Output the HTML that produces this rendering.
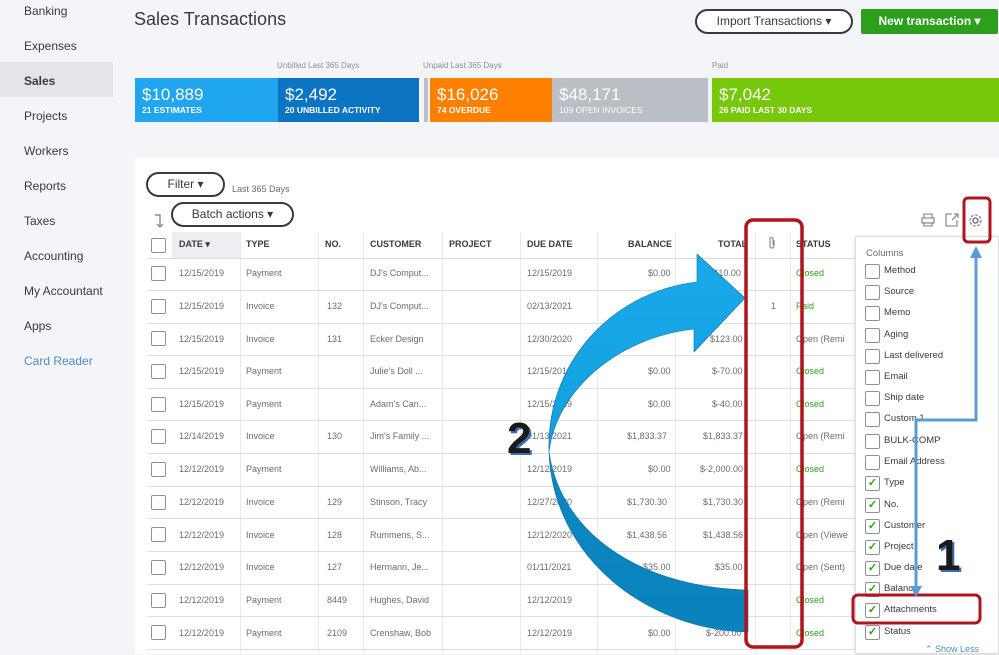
<!DOCTYPE html>
<html><head><style>
*{margin:0;padding:0;box-sizing:border-box}
body{width:999px;height:654px;overflow:hidden;background:#f4f5f8;font-family:"Liberation Sans",sans-serif;color:#393a3d;position:relative}
.a{position:absolute;white-space:nowrap}
.nav{left:24px;font-size:12px;color:#393a3d}
.card{position:absolute;top:78px;height:44px;color:#fff}
.card b{position:absolute;left:7px;top:7px;font-size:17px;font-weight:normal}
.card i{position:absolute;left:7px;top:27px;font-size:8.5px;font-style:normal;font-weight:bold}
.lbl{font-size:8px;color:#8d9096;top:61px}
.th{font-size:9px;font-weight:bold;color:#393a3d;top:239px}
.cb{position:absolute;width:15px;height:15px;border:1px solid #8d9096;border-radius:2px;background:#fff}
.td{font-size:9px;color:#6b6c72}
.hl{position:absolute;left:147px;width:708px;height:1px;background:#dcdee2}
.vl{position:absolute;top:232px;width:1px;height:422px;background:#e8e9ec}
.dc{position:absolute;left:865px;width:15px;height:15px;border:1px solid #8d9096;border-radius:2px;background:#fff;color:#2ca01c;font-size:11px;line-height:13px;text-align:center;font-weight:bold}
.dl{left:884px;font-size:9.5px;color:#393a3d}
</style></head><body>
<div class="a" style="left:0;top:62px;width:113px;height:35px;background:#e3e5e8"></div>
<div class="a nav" style="top:4px">Banking</div>
<div class="a nav" style="top:39px">Expenses</div>
<div class="a nav" style="top:74px;font-weight:bold">Sales</div>
<div class="a nav" style="top:109px">Projects</div>
<div class="a nav" style="top:144px">Workers</div>
<div class="a nav" style="top:179px">Reports</div>
<div class="a nav" style="top:214px">Taxes</div>
<div class="a nav" style="top:249px">Accounting</div>
<div class="a nav" style="top:284px">My Accountant</div>
<div class="a nav" style="top:319px">Apps</div>
<div class="a nav" style="top:354px;color:#4b8ebf">Card Reader</div>

<div class="a" style="left:134px;top:9px;font-size:18px;color:#393a3d">Sales Transactions</div>
<div class="a" style="left:695px;top:9px;width:158px;height:25px;border:2px solid #393a3d;border-radius:13px;font-size:12px;text-align:center;line-height:21px;background:#fff">Import Transactions ▾</div>
<div class="a" style="left:861px;top:9px;width:137px;height:25px;background:#2ca01c;border-radius:2px;color:#fff;font-size:12px;font-weight:bold;text-align:center;line-height:25px">New transaction ▾</div>

<div class="a lbl" style="left:277px">Unbilled Last 365 Days</div>
<div class="a lbl" style="left:423px">Unpaid Last 365 Days</div>
<div class="a lbl" style="left:712px">Paid</div>
<div class="card" style="left:135px;width:143px;background:#1fa6ee"><b>$10,889</b><i>21 ESTIMATES</i></div>
<div class="card" style="left:278px;width:141px;background:#0b75c4"><b>$2,492</b><i>20 UNBILLED ACTIVITY</i></div>
<div class="card" style="left:424px;width:4px;background:#babec5"></div>
<div class="card" style="left:430px;width:122px;background:#ff8000"><b>$16,026</b><i>74 OVERDUE</i></div>
<div class="card" style="left:552px;width:156px;background:#babec5"><b>$48,171</b><i style="font-weight:normal">109 OPEN INVOICES</i></div>
<div class="card" style="left:712px;width:287px;background:#77c70b"><b>$7,042</b><i>26 PAID LAST 30 DAYS</i></div>

<div class="a" style="left:135px;top:158px;width:864px;height:496px;background:#fff"></div>
<div class="a" style="left:146px;top:172px;width:79px;height:25px;border:2px solid #393a3d;border-radius:13px;font-size:12px;text-align:center;line-height:21px">Filter ▾</div>
<div class="a" style="left:232px;top:184px;font-size:9px;color:#6b6c72">Last 365 Days</div>
<div class="a" style="left:171px;top:202px;width:123px;height:25px;border:2px solid #393a3d;border-radius:13px;font-size:12px;text-align:center;line-height:21px">Batch actions ▾</div>
<svg class="a" style="left:153px;top:214px" width="12" height="14" viewBox="0 0 12 14"><path d="M2 1H7V12M4 10L7 13L10 10" fill="none" stroke="#8d9096" stroke-width="1.5"/></svg>
<svg class="a" style="left:920px;top:212px" width="16" height="16" viewBox="0 0 16 16"><path d="M4 6V2H12V6M2 6H14V11H2ZM4 10V14H12V10" fill="none" stroke="#8d9096" stroke-width="1.3"/></svg>
<svg class="a" style="left:944px;top:212px" width="16" height="16" viewBox="0 0 16 16"><path d="M13 8V14H2V2H8M10 2H14V6M14 2L8 8" fill="none" stroke="#8d9096" stroke-width="1.3"/></svg>
<svg class="a" style="left:967px;top:212px" width="17" height="17" viewBox="0 0 20 20"><circle cx="10" cy="10" r="3" fill="none" stroke="#6b6c72" stroke-width="1.5"/><circle cx="10" cy="10" r="6.5" fill="none" stroke="#6b6c72" stroke-width="1.3" stroke-dasharray="3 2"/></svg>

<div class="a" style="left:172px;top:232px;width:68px;height:26px;background:#eceef1"></div>
<div class="cb" style="left:151px;top:238px"></div>
<div class="a th" style="left:179px">DATE ▾</div>
<div class="a th" style="left:246px">TYPE</div>
<div class="a th" style="left:325px">NO.</div>
<div class="a th" style="left:370px">CUSTOMER</div>
<div class="a th" style="left:449px">PROJECT</div>
<div class="a th" style="left:527px">DUE DATE</div>
<div class="a th" style="left:628px">BALANCE</div>
<div class="a th" style="left:718px">TOTAL</div>
<svg class="a" style="left:767px;top:236px" width="10" height="14" viewBox="0 0 10 14"><path d="M7 4V10A2 2 0 0 1 3 10V3A1.3 1.3 0 0 1 6 3V9" fill="none" stroke="#8d9096" stroke-width="1.2"/></svg>
<div class="a th" style="left:796px">STATUS</div>
<div class="vl" style="left:240px"></div><div class="vl" style="left:318px"></div><div class="vl" style="left:363px"></div><div class="vl" style="left:442px"></div><div class="vl" style="left:520px"></div><div class="vl" style="left:597px"></div><div class="vl" style="left:675px"></div><div class="vl" style="left:755px"></div><div class="vl" style="left:790px"></div>

<div class="hl" style="top:258px"></div><div class="hl" style="top:290px"></div><div class="hl" style="top:323px"></div><div class="hl" style="top:355px"></div><div class="hl" style="top:388px"></div><div class="hl" style="top:420px"></div><div class="hl" style="top:453px"></div><div class="hl" style="top:486px"></div><div class="hl" style="top:518px"></div><div class="hl" style="top:551px"></div><div class="hl" style="top:584px"></div><div class="hl" style="top:616px"></div><div class="hl" style="top:649px"></div>

<div class="cb" style="left:151px;top:266px"></div><div class="a td" style="left:179px;top:268px">12/15/2019</div><div class="a td" style="left:246px;top:268px">Payment</div><div class="a td" style="left:370px;top:268px">DJ's Comput...</div><div class="a td" style="left:527px;top:268px">12/15/2019</div><div class="a td" style="left:648px;top:268px">$0.00</div><div class="a td" style="left:706px;top:268px">$-110.00</div><div class="a td" style="left:796px;top:268px;color:#2ca01c">Closed</div>
<div class="cb" style="left:151px;top:299px"></div><div class="a td" style="left:179px;top:301px">12/15/2019</div><div class="a td" style="left:246px;top:301px">Invoice</div><div class="a td" style="left:327px;top:301px">132</div><div class="a td" style="left:370px;top:301px">DJ's Comput...</div><div class="a td" style="left:527px;top:301px">02/13/2021</div><div class="a td" style="left:771px;top:301px">1</div><div class="a td" style="left:796px;top:301px;color:#2ca01c">Paid</div>
<div class="cb" style="left:151px;top:331px"></div><div class="a td" style="left:179px;top:334px">12/15/2019</div><div class="a td" style="left:246px;top:334px">Invoice</div><div class="a td" style="left:327px;top:334px">131</div><div class="a td" style="left:370px;top:334px">Ecker Design</div><div class="a td" style="left:527px;top:334px">12/30/2020</div><div class="a td" style="left:710px;top:334px">$123.00</div><div class="a td" style="left:796px;top:334px">Open (Remi</div>
<div class="cb" style="left:151px;top:364px"></div><div class="a td" style="left:179px;top:366px">12/15/2019</div><div class="a td" style="left:246px;top:366px">Payment</div><div class="a td" style="left:370px;top:366px">Julie's Doll ...</div><div class="a td" style="left:527px;top:366px">12/15/2019</div><div class="a td" style="left:648px;top:366px">$0.00</div><div class="a td" style="left:712px;top:366px">$-70.00</div><div class="a td" style="left:796px;top:366px;color:#2ca01c">Closed</div>
<div class="cb" style="left:151px;top:397px"></div><div class="a td" style="left:179px;top:399px">12/15/2019</div><div class="a td" style="left:246px;top:399px">Payment</div><div class="a td" style="left:370px;top:399px">Adam's Can...</div><div class="a td" style="left:527px;top:399px">12/15/2019</div><div class="a td" style="left:648px;top:399px">$0.00</div><div class="a td" style="left:712px;top:399px">$-40.00</div><div class="a td" style="left:796px;top:399px;color:#2ca01c">Closed</div>
<div class="cb" style="left:151px;top:429px"></div><div class="a td" style="left:179px;top:431px">12/14/2019</div><div class="a td" style="left:246px;top:431px">Invoice</div><div class="a td" style="left:327px;top:431px">130</div><div class="a td" style="left:370px;top:431px">Jim's Family ...</div><div class="a td" style="left:527px;top:431px">01/13/2021</div><div class="a td" style="left:627px;top:431px">$1,833.37</div><div class="a td" style="left:703px;top:431px">$1,833.37</div><div class="a td" style="left:796px;top:431px">Open (Remi</div>
<div class="cb" style="left:151px;top:462px"></div><div class="a td" style="left:179px;top:464px">12/12/2019</div><div class="a td" style="left:246px;top:464px">Payment</div><div class="a td" style="left:370px;top:464px">Williams, Ab...</div><div class="a td" style="left:527px;top:464px">12/12/2019</div><div class="a td" style="left:648px;top:464px">$0.00</div><div class="a td" style="left:700px;top:464px">$-2,000.00</div><div class="a td" style="left:796px;top:464px;color:#2ca01c">Closed</div>
<div class="cb" style="left:151px;top:495px"></div><div class="a td" style="left:179px;top:497px">12/12/2019</div><div class="a td" style="left:246px;top:497px">Invoice</div><div class="a td" style="left:327px;top:497px">129</div><div class="a td" style="left:370px;top:497px">Stinson, Tracy</div><div class="a td" style="left:527px;top:497px">12/27/2020</div><div class="a td" style="left:627px;top:497px">$1,730.30</div><div class="a td" style="left:703px;top:497px">$1,730.30</div><div class="a td" style="left:796px;top:497px">Open (Remi</div>
<div class="cb" style="left:151px;top:527px"></div><div class="a td" style="left:179px;top:530px">12/12/2019</div><div class="a td" style="left:246px;top:530px">Invoice</div><div class="a td" style="left:327px;top:530px">128</div><div class="a td" style="left:370px;top:530px">Rummens, S...</div><div class="a td" style="left:527px;top:530px">12/12/2020</div><div class="a td" style="left:627px;top:530px">$1,438.56</div><div class="a td" style="left:703px;top:530px">$1,438.56</div><div class="a td" style="left:796px;top:530px">Open (Viewe</div>
<div class="cb" style="left:151px;top:560px"></div><div class="a td" style="left:179px;top:562px">12/12/2019</div><div class="a td" style="left:246px;top:562px">Invoice</div><div class="a td" style="left:327px;top:562px">127</div><div class="a td" style="left:370px;top:562px">Hermann, Je...</div><div class="a td" style="left:527px;top:562px">01/11/2021</div><div class="a td" style="left:643px;top:562px">$35.00</div><div class="a td" style="left:715px;top:562px">$35.00</div><div class="a td" style="left:796px;top:562px">Open (Sent)</div>
<div class="cb" style="left:151px;top:593px"></div><div class="a td" style="left:179px;top:595px">12/12/2019</div><div class="a td" style="left:246px;top:595px">Payment</div><div class="a td" style="left:327px;top:595px">8449</div><div class="a td" style="left:370px;top:595px">Hughes, David</div><div class="a td" style="left:527px;top:595px">12/12/2019</div><div class="a td" style="left:796px;top:595px;color:#2ca01c">Closed</div>
<div class="cb" style="left:151px;top:625px"></div><div class="a td" style="left:179px;top:628px">12/12/2019</div><div class="a td" style="left:246px;top:628px">Payment</div><div class="a td" style="left:327px;top:628px">2109</div><div class="a td" style="left:370px;top:628px">Crenshaw, Bob</div><div class="a td" style="left:527px;top:628px">12/12/2019</div><div class="a td" style="left:648px;top:628px">$0.00</div><div class="a td" style="left:706px;top:628px">$-200.00</div><div class="a td" style="left:796px;top:628px;color:#2ca01c">Closed</div>

<div class="a" style="left:855px;top:236px;width:144px;height:418px;background:#fff;border:1px solid #dcdee2;box-shadow:0 1px 4px rgba(0,0,0,.15)"></div>
<div class="a" style="left:866px;top:248px;font-size:9.5px;color:#6b6c72">Columns</div>
<div class="dc" style="top:264px"></div><div class="a dl" style="top:265px">Method</div>
<div class="dc" style="top:285px"></div><div class="a dl" style="top:286px">Source</div>
<div class="dc" style="top:306px"></div><div class="a dl" style="top:307px">Memo</div>
<div class="dc" style="top:328px"></div><div class="a dl" style="top:329px">Aging</div>
<div class="dc" style="top:349px"></div><div class="a dl" style="top:350px">Last delivered</div>
<div class="dc" style="top:370px"></div><div class="a dl" style="top:371px">Email</div>
<div class="dc" style="top:391px"></div><div class="a dl" style="top:392px">Ship date</div>
<div class="dc" style="top:412px"></div><div class="a dl" style="top:413px">Custom 1</div>
<div class="dc" style="top:434px"></div><div class="a dl" style="top:435px">BULK-COMP</div>
<div class="dc" style="top:455px"></div><div class="a dl" style="top:456px">Email Address</div>
<div class="dc" style="top:476px">✓</div><div class="a dl" style="top:477px">Type</div>
<div class="dc" style="top:498px">✓</div><div class="a dl" style="top:499px">No.</div>
<div class="dc" style="top:519px">✓</div><div class="a dl" style="top:520px">Customer</div>
<div class="dc" style="top:540px">✓</div><div class="a dl" style="top:541px">Project</div>
<div class="dc" style="top:561px">✓</div><div class="a dl" style="top:562px">Due date</div>
<div class="dc" style="top:582px">✓</div><div class="a dl" style="top:583px">Balance</div>
<div class="dc" style="top:603px">✓</div><div class="a dl" style="top:604px">Attachments</div>
<div class="dc" style="top:625px">✓</div><div class="a dl" style="top:626px">Status</div>
<div class="a" style="left:925px;top:644px;font-size:9px;color:#4b8ebf">⌃ Show Less</div>

<svg class="a" style="left:0;top:0" width="999" height="654" viewBox="0 0 999 654">
<defs><linearGradient id="g" x1="0" y1="0" x2="0" y2="1"><stop offset="0" stop-color="#19a9ea"/><stop offset=".5" stop-color="#12a0df"/><stop offset=".6" stop-color="#0b88c2"/><stop offset="1" stop-color="#0a82bb"/></linearGradient></defs>
<path d="M745 298 L697 254 L697 282 C610 292 546 365 549 452 C553 560 650 630 748 632 L748 590 C650 588 562 540 549 452 C556 392 615 338 694 329 L694 352 Z" fill="url(#g)" stroke="#0a6fa3" stroke-width=".6"/>
<rect x="746" y="220" width="56" height="427" rx="7" fill="none" stroke="#b0141c" stroke-width="3.5"/>
<rect x="964" y="198" width="26" height="44" rx="4" fill="none" stroke="#b0141c" stroke-width="3"/>
<rect x="853" y="595" width="127" height="28" rx="5" fill="none" stroke="#b0141c" stroke-width="3"/>
<path d="M976 256 V420 H916 V588" fill="none" stroke="#5b9bd5" stroke-width="3"/>
<path d="M970 258 L976 246 L982 258 Z M910 586 L916 597 L922 586 Z" fill="#5b9bd5"/>
<text x="938" y="572" font-family="Liberation Sans" font-weight="bold" font-size="44" fill="#3a6fb0">1</text>
<text x="936" y="570" font-family="Liberation Sans" font-weight="bold" font-size="44" fill="#1a1a1a">1</text>
<text x="509" y="455" font-family="Liberation Sans" font-weight="bold" font-size="44" fill="#3a6fb0">2</text>
<text x="507" y="453" font-family="Liberation Sans" font-weight="bold" font-size="44" fill="#1a1a1a">2</text>
</svg>
</body></html>
